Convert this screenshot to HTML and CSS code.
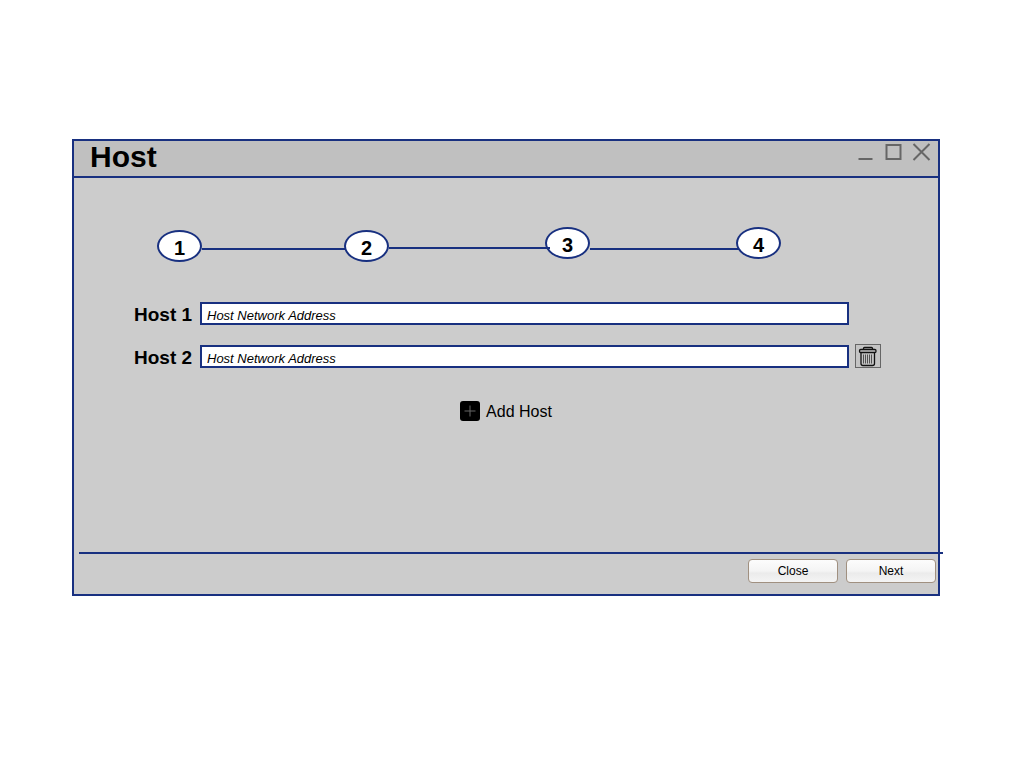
FILE: index.html
```html
<!DOCTYPE html>
<html lang="en">
<head>
<meta charset="utf-8">
<meta name="viewport" content="width=device-width, initial-scale=1">
<title>Host</title>
<link rel="stylesheet" href="styles.css">
</head>
<body>
<form class="window">
  <header class="titlebar">
    <h1 class="title">Host</h1>
    <div class="controls">
      <button type="button" class="icon-button" aria-label="Minimize"><svg width="20" height="20" viewBox="0 0 20 20"><path d="M2.500 17H16.500"/></svg></button>
      <button type="button" class="icon-button" aria-label="Maximize"><svg width="20" height="20" viewBox="0 0 20 20"><path d="M2.500 3H16.500V17H2.500Z"/></svg></button>
      <button type="button" class="icon-button" aria-label="Close window"><svg width="20" height="20" viewBox="0 0 20 20"><path d="M1.500 2L17.500 18M17.500 2L1.500 18"/></svg></button>
    </div>
  </header>
  <main class="content">
    <ol class="steps">
      <li class="step step-low">1</li>
      <li class="link link-first" role="presentation"></li>
      <li class="step step-low">2</li>
      <li class="link link-second" role="presentation"></li>
      <li class="step">3</li>
      <li class="link link-third" role="presentation"></li>
      <li class="step">4</li>
    </ol>
    <div class="hosts">
      <div class="row">
        <label class="label" for="host1">Host 1</label>
        <input class="field" id="host1" type="text" placeholder="Host Network Address">
        <span class="slot"></span>
      </div>
      <div class="row">
        <label class="label" for="host2">Host 2</label>
        <input class="field" id="host2" type="text" placeholder="Host Network Address">
        <button type="button" class="slot trash" aria-label="Remove Host 2">
          <svg width="24" height="22" viewBox="0 0 24 22" fill="none" stroke="#111" stroke-width="1.300">
            <path d="M7.500 4.500V3.500Q7.500 2.500 8.500 2.500H15.500Q16.500 2.500 16.500 3.500V4.500"/>
            <rect x="3.500" y="4.500" width="16.500" height="3" rx="1.200"/>
            <path d="M5 8V18.500Q5 20.500 7 20.500H16.500Q18.500 20.500 18.500 18.500V8"/>
            <path stroke="#333" stroke-width=".8" d="M7.500 9.500V18.500M9.500 9.500V18.500M11.500 9.500V18.500M13.500 9.500V18.500M15.500 9.500V18.500"/>
          </svg>
        </button>
      </div>
    </div>
    <button type="button" class="add">
      <svg width="20" height="20" viewBox="0 0 20 20"><rect width="20" height="20" rx="3"/><path d="M4.500 10H15.500M10 4.500V15.500" stroke="#666"/></svg>
      <span class="add-text">Add Host</span>
    </button>
  </main>
  <footer class="footer">
    <button type="button" class="button">Close</button>
    <button type="submit" class="button">Next</button>
  </footer>
</form>
</body>
</html>
```
FILE: styles.css
```css
* {
  box-sizing: border-box;
}

body {
  margin: 0;
  padding: 139px 84px 40px 72px;
  background: #fff;
  color: #000;
  font-family: "Liberation Sans", Arial, sans-serif;
}

.window {
  border: 2px solid #183080;
  background: #ccc;
}

.titlebar {
  display: flex;
  justify-content: space-between;
  align-items: flex-start;
  min-height: 37px;
  padding: 0 6px 0 16px;
  border-bottom: 2px solid #183080;
  background: #c0c0c0;
}

.title {
  margin: 0;
  font-size: 30px;
  line-height: 32px;
}

.controls {
  display: flex;
  gap: 8px;
  padding-top: 1px;
}

.icon-button {
  display: flex;
  padding: 0;
  border: 0;
  background: none;
  fill: none;
  stroke: #666;
  stroke-width: 2;
}

.content {
  min-height: 374px;
  padding: 49px 0 20px;
}

.steps {
  display: flex;
  align-items: flex-start;
  margin: 0 157px 40px 83px;
  padding: 0;
  list-style: none;
}

.step {
  flex: none;
  width: 45px;
  height: 32px;
  padding-top: 4px;
  border: 2px solid #183080;
  border-radius: 50%;
  background: #fff;
  font-size: 20px;
  font-weight: bold;
  line-height: 24px;
  text-align: center;
}

.step-low {
  margin-top: 3px;
}

.link {
  height: 2px;
  margin-top: 21px;
  margin-right: -3px;
  background: #183080;
}

.link-first {
  flex: 145 1 0;
}

.link-second {
  z-index: 1;
  flex: 161 1 0;
  margin-top: 20px;
  margin-right: -5px;
}

.link-third {
  flex: 149 1 0;
}

.hosts {
  display: grid;
  gap: 20px;
  padding: 0 57px 0 60px;
}

.row {
  display: flex;
  align-items: flex-end;
  height: 23px;
}

.label {
  flex: none;
  width: 66px;
  font-size: 19px;
  font-weight: bold;
  line-height: 20px;
}

.field {
  flex: 1;
  min-width: 0;
  height: 23px;
  padding: 3px 5px 0;
  border: 2px solid #183080;
  border-radius: 0;
  background: #fff;
  color: #000;
  font: italic 13px "Liberation Sans", Arial, sans-serif;
}

.field::placeholder {
  color: #000;
  opacity: 1;
}

.slot {
  flex: none;
  width: 26px;
  height: 24px;
  margin-left: 6px;
}

.trash {
  display: flex;
  padding: 0;
  border: 1px solid #666;
  background: #c4c4c4;
}

.add {
  display: flex;
  align-items: center;
  gap: 6px;
  margin: 33px auto 0;
  padding: 0;
  border: 0;
  background: none;
  color: #000;
  font: 16px/18px "Liberation Sans", Arial, sans-serif;
}

.add-text {
  padding-top: 2px;
}

.footer {
  display: flex;
  justify-content: flex-end;
  gap: 8px;
  margin: 0 -5px 0 5px;
  padding: 5px 7px 11px;
  border-top: 2px solid #183080;
}

.button {
  width: 90px;
  height: 24px;
  padding: 0;
  border: 1px solid #a09080;
  border-radius: 4px;
  background: linear-gradient(#fcfcfc, #f4f4f4 50%, #ebebeb 60%, #f4f4f4);
  color: #000;
  font: 12px "Liberation Sans", Arial, sans-serif;
}
```
